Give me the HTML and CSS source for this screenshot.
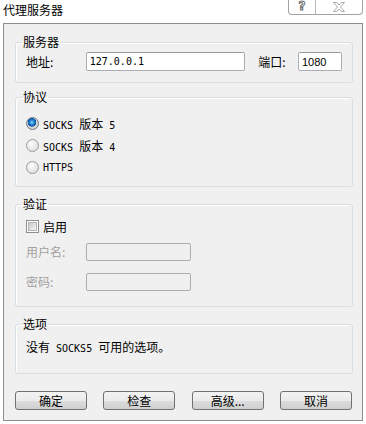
FILE: index.html
```html
<!DOCTYPE html>
<html lang="zh-CN">
  <head>
    <meta charset="UTF-8" />
    <title>代理服务器</title>
    <link rel="stylesheet" href="styles.css">
  </head>
  <body>
    <div class="titlebar">
      <span class="title">代理服务器</span>
      <div class="caption">
        <span class="cap-help">?</span>
        <span class="cap-close">
          <svg width="14" height="10" viewBox="0 0 14 10">
            <path d="M1.5 0.5h3l2.5 2.5 2.5-2.5h3l-4 4.5 4 4.5h-3l-2.5-2.5-2.5 2.5h-3l4-4.5z"
              fill="none" stroke="#a9a9a9" stroke-width="1" />
          </svg>
        </span>
      </div>
    </div>

    <div class="panel">
      <fieldset class="group group-server">
        <legend>服务器</legend>
        <div class="group-body row">
          <label class="lbl">地址:</label>
          <input type="text" class="field field-host" value="127.0.0.1" />
          <label class="lbl lbl-port">端口:</label>
          <input type="text" class="field field-port" value="1080" />
        </div>
      </fieldset>

      <fieldset class="group group-proto">
        <legend>协议</legend>
        <div class="group-body">
          <div class="option">
            <span class="radio checked"></span>
            <span><span class="lat">SOCKS </span>版本<span class="lat"> 5</span></span>
          </div>
          <div class="option">
            <span class="radio"></span>
            <span><span class="lat">SOCKS </span>版本<span class="lat"> 4</span></span>
          </div>
          <div class="option">
            <span class="radio"></span>
            <span class="lat">HTTPS</span>
          </div>
        </div>
      </fieldset>

      <fieldset class="group group-auth">
        <legend>验证</legend>
        <div class="group-body">
          <div class="option check-row">
            <span class="checkbox"></span>
            <span>启用</span>
          </div>
          <div class="row auth-row">
            <label class="lbl disabled">用户名:</label>
            <input type="text" class="field field-auth" disabled />
          </div>
          <div class="row auth-row">
            <label class="lbl disabled">密码:</label>
            <input type="password" class="field field-auth" disabled />
          </div>
        </div>
      </fieldset>

      <fieldset class="group group-opts">
        <legend>选项</legend>
        <div class="group-body">
          <p class="note">没有<span class="lat"> SOCKS5 </span>可用的选项。</p>
        </div>
      </fieldset>

      <div class="buttons">
        <button>确定</button>
        <button>检查</button>
        <button>高级...</button>
        <button>取消</button>
      </div>
    </div>
  </body>
</html>
```

FILE: styles.css
```css
body {
  margin: 0;
  background-color: #fff;
  font-family: "Noto Sans CJK SC", "Noto Sans", sans-serif;
  font-size: 12px;
  color: #000;
}
.titlebar {
  height: 23px;
  display: flex;
  justify-content: space-between;
  align-items: flex-start;
  padding-left: 3px;
  padding-right: 3px;
}
.title {
  line-height: 20px;
  font-size: 12px;
}
.caption {
  display: flex;
  height: 14px;
  border: 1px solid #a3a3a3;
  border-top: none;
  border-radius: 0 0 4px 4px;
  background-color: #fff;
}
.cap-help {
  width: 26px;
  border-right: 1px solid #b8b8b8;
  text-align: center;
  font-family: "DejaVu Sans", sans-serif;
  font-size: 12px;
  font-weight: bold;
  line-height: 13px;
  color: #fff;
  -webkit-text-stroke: 1px #6d6d6d;
}
.cap-close {
  width: 46px;
  display: flex;
  justify-content: center;
  align-items: center;
}
.panel {
  margin: 0 3px;
  height: 398px;
  border: 1px solid #8b8d92;
  background-color: #f0f0f0;
  padding-top: 11px;
  box-sizing: border-box;
}
.group {
  margin: 0 9px 0 11px;
  padding: 0;
  border: 1px solid #d5dfe5;
  border-radius: 3px;
  box-shadow: inset 1px 1px 0 #fff;
  min-width: 0;
}
.group legend {
  margin-left: 6px;
  padding: 0 1px;
  line-height: 14px;
}
.group-body {
  padding: 0 10px;
}
.group-server .group-body {
  padding-top: 3px;
  padding-bottom: 11px;
}
.group-proto {
  margin-top: 7px;
}
.group-proto .group-body {
  padding-top: 8px;
  padding-bottom: 8px;
}
.group-auth {
  margin-top: 10px;
}
.group-auth .group-body {
  padding-top: 5px;
  padding-bottom: 15px;
}
.group-opts {
  margin-top: 10px;
}
.group-opts .group-body {
  padding-top: 9px;
  padding-bottom: 17px;
}
.row {
  display: flex;
  align-items: center;
}
.lbl {
  width: 60px;
  line-height: 14px;
}
.lbl-port {
  width: 40px;
  margin-left: 13px;
}
.disabled {
  color: #a0a0a0;
}
.field {
  box-sizing: border-box;
  height: 19px;
  margin: 0;
  padding: 0 3px;
  border: 1px solid #abadb3;
  border-top-color: #9a9da4;
  border-radius: 2px;
  background-color: #fff;
  outline: none;
}
.field-host {
  width: 160px;
  font-family: "DejaVu Sans Mono", monospace;
  font-size: 10px;
}
.field-port {
  width: 44px;
  font-family: "Liberation Sans", sans-serif;
  font-size: 11px;
}
.field-auth {
  width: 105px;
  height: 18px;
  background-color: #f0f0f0;
  border-color: #adadad;
}
.auth-row {
  margin-top: 7px;
}
.auth-row + .auth-row {
  margin-top: 12px;
}
.option {
  display: flex;
  align-items: center;
  height: 22px;
  gap: 4px;
}
.check-row {
  height: 20px;
}
.lat {
  font-family: "DejaVu Sans Mono", monospace;
  font-size: 10px;
  white-space: pre;
}
.radio {
  width: 11px;
  height: 11px;
  border: 1px solid #9c9c9c;
  border-radius: 50%;
  background: radial-gradient(circle at 40% 35%, #fdfdfd, #d6d6d6);
  flex: none;
}
.radio.checked {
  border-color: #6b7b8c;
  background:
    radial-gradient(circle at 45% 40%, #8fd6fb 0, #2a8fd8 2px, #0a4f9e 4px, transparent 4.5px),
    radial-gradient(circle, #e8e8e8, #c6c6c6);
}
.checkbox {
  width: 9px;
  height: 9px;
  border: 1px solid #8e8f8f;
  padding: 1px;
  background-color: #fff;
  flex: none;
}
.checkbox::after {
  content: "";
  display: block;
  width: 7px;
  height: 7px;
  border: 1px solid #b3b3b3;
  background: linear-gradient(135deg, #c9c9c9, #f4f4f4);
}
.note {
  margin: 0;
  line-height: 14px;
}
.buttons {
  display: flex;
  justify-content: space-between;
  margin: 17px 10px 0 11px;
}
button {
  width: 72px;
  height: 19px;
  padding: 0;
  border: 1px solid #707070;
  border-radius: 3px;
  background: linear-gradient(#f2f2f2 0%, #ebebeb 50%, #dddddd 51%, #cfcfcf 100%);
  font-family: "Noto Sans CJK SC", sans-serif;
  font-size: 12px;
  line-height: 15px;
  color: #000;
}
```
